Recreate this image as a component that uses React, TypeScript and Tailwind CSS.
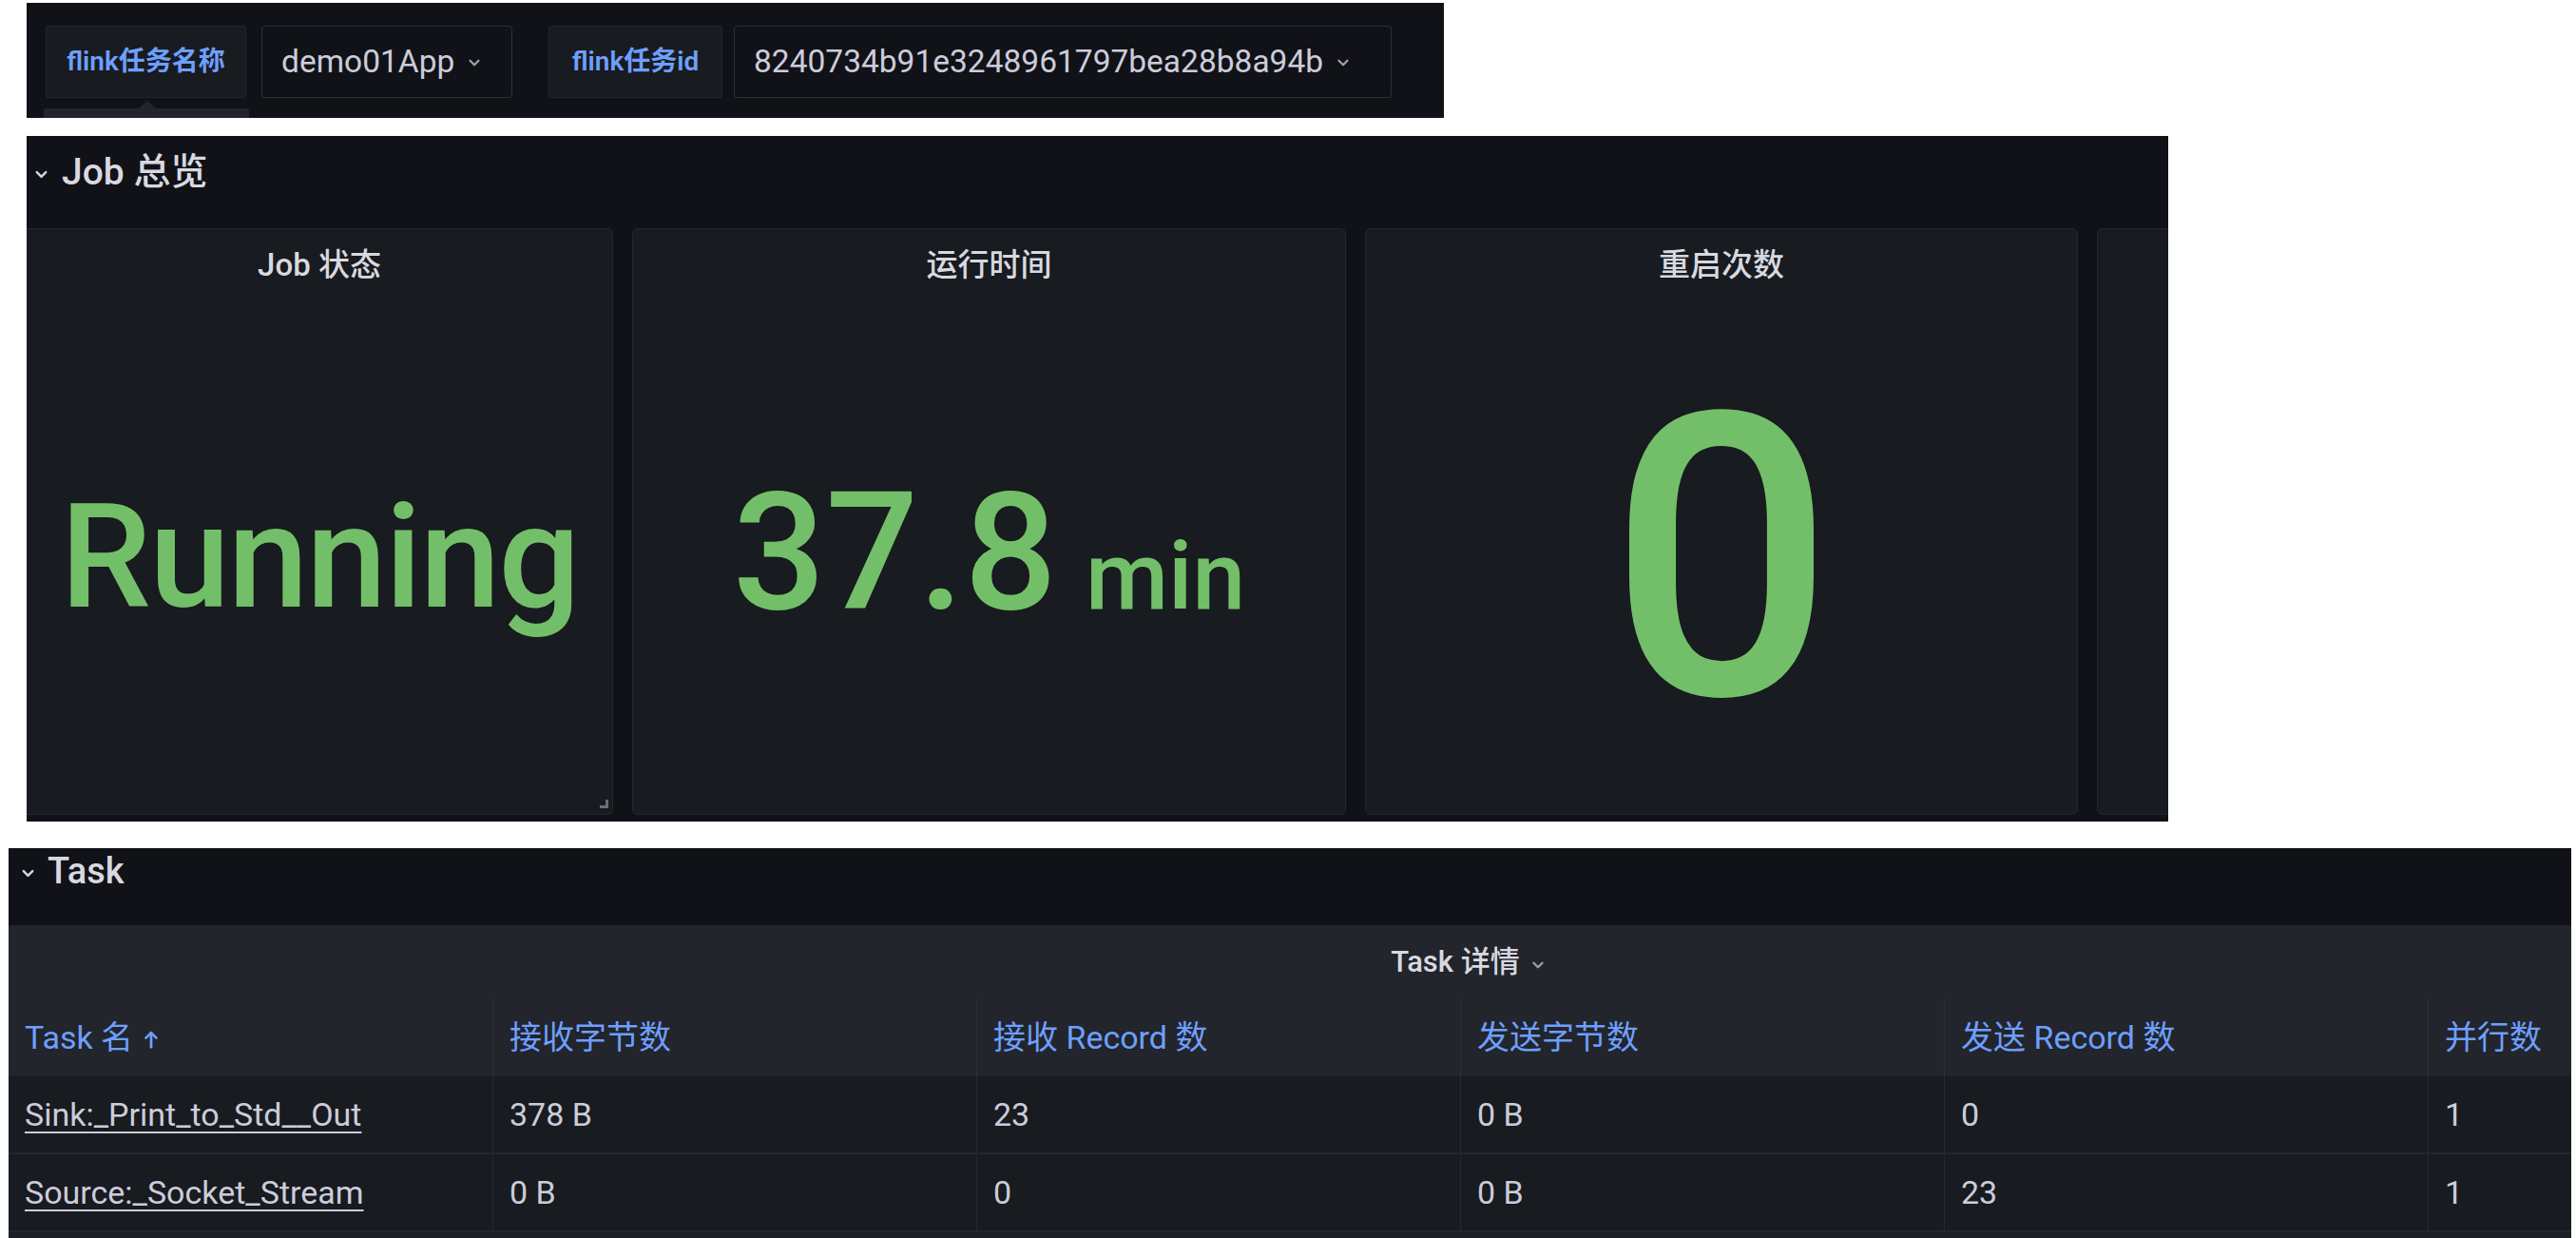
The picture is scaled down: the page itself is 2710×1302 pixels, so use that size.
const font = "font-[Roboto,'Noto_Sans_CJK_SC',sans-serif]";

function Chevron({ className = "" }: { className?: string }) {
  return (
    <svg viewBox="0 0 16 16" className={className} fill="none" stroke="currentColor" strokeWidth={2} strokeLinecap="round" strokeLinejoin="round">
      <polyline points="4,6 8,10 12,6" />
    </svg>
  );
}

function ArrowUp({ className = "" }: { className?: string }) {
  return (
    <svg viewBox="0 0 16 16" className={className} fill="none" stroke="currentColor" strokeWidth={2} strokeLinecap="round" strokeLinejoin="round">
      <line x1="8" y1="14" x2="8" y2="3" />
      <polyline points="4,7 8,3 12,7" />
    </svg>
  );
}

const VarLabel = ({ children, w }: { children: React.ReactNode; w: string }) => (
  <div className={`${w} h-[76px] flex items-center justify-center rounded-[3px] border border-[#23262b] bg-[#181b1f] text-[28px] font-semibold text-[#6e9fff]`}>
    {children}
  </div>
);

const VarValue = ({ children, w }: { children: React.ReactNode; w: string }) => (
  <div className={`${w} h-[76px] flex items-center gap-[12px] pl-[20px] rounded-[3px] border border-[#2c2f35] bg-[#111217] text-[33.5px] text-[#ccccdc]`}>
    <span>{children}</span>
    <Chevron className="w-[18px] h-[18px] text-[#9fa1a6] mt-[2px]" />
  </div>
);

const StatPanel = ({
  title,
  w,
  first,
  handle,
  children,
}: {
  title: string;
  w: string;
  first?: boolean;
  handle?: boolean;
  children?: React.ReactNode;
}) => (
  <div
    className={`${w} h-[617px] shrink-0 relative flex flex-col bg-[#181b1f] border border-[#24272c] ${
      first ? "border-l-0 rounded-r-[6px]" : "rounded-[6px]"
    }`}
  >
    <div className="h-[76px] flex items-center justify-center text-[33px] font-medium text-[#d8d9e0]">{title}</div>
    <div className="flex-1 flex items-center justify-center text-[#73bf69] font-medium leading-none">{children}</div>
    {handle && (
      <div className="absolute right-[4px] bottom-[6px] w-[9px] h-[9px] border-r-[3px] border-b-[3px] border-[#6b6d72]" />
    )}
  </div>
);

const cols = ["Task 名", "接收字节数", "接收 Record 数", "发送字节数", "发送 Record 数", "并行数"];
const rows = [
  ["Sink:_Print_to_Std__Out", "378 B", "23", "0 B", "0", "1"],
  ["Source:_Socket_Stream", "0 B", "0", "0 B", "23", "1"],
];

export default function App() {
  return (
    <div className={`min-h-screen bg-white ${font} flex flex-col items-start`}>
      {/* variables bar */}
      <div className="ml-[28px] mt-[3px] w-[1491px] h-[121px] bg-[#111217] relative flex items-start pt-[24px] pl-[20px]">
        <div className="relative">
          <VarLabel w="w-[211px]">flink任务名称</VarLabel>
          <div className="absolute left-[-2px] top-[87px] w-[216px] h-[10px] bg-[#22252b] rounded-t-[3px]" />
          <div className="absolute left-[98px] top-[79px] w-0 h-0 border-l-[9px] border-r-[9px] border-b-[8px] border-l-transparent border-r-transparent border-b-[#22252b]" />
        </div>
        <div className="ml-[16px]">
          <VarValue w="w-[264px]">demo01App</VarValue>
        </div>
        <div className="ml-[38px]">
          <VarLabel w="w-[183px]">flink任务id</VarLabel>
        </div>
        <div className="ml-[12px]">
          <VarValue w="w-[692px]">8240734b91e3248961797bea28b8a94b</VarValue>
        </div>
      </div>

      {/* Job overview row */}
      <div className="ml-[28px] mt-[19px] w-[2253px] h-[721px] bg-[#111217] overflow-hidden flex flex-col">
        <div className="h-[76px] flex items-center gap-[12px] pl-[6px] text-[#d8d9e0]">
          <Chevron className="w-[19px] h-[19px] mt-[4px]" />
          <span className="text-[39px] font-medium">Job 总览</span>
        </div>
        <div className="mt-[21px] flex gap-[20px]">
          <StatPanel title="Job 状态" w="w-[617px]" first handle>
            <span className="text-[152px] tracking-[-2px] mb-[2px]">Running</span>
          </StatPanel>
          <StatPanel title="运行时间" w="w-[751px]">
            <div className="flex items-baseline gap-[30px] mb-[12px]">
              <span className="text-[172px]">37.8</span>
              <span className="text-[100px]">min</span>
            </div>
          </StatPanel>
          <StatPanel title="重启次数" w="w-[750px]">
            <span className="text-[416px] leading-[0.8] mt-[4px]">0</span>
          </StatPanel>
          <StatPanel title="" w="w-[750px]" />
        </div>
      </div>

      {/* Task row */}
      <div className="ml-[9px] mt-[28px] w-[2696px] h-[410px] bg-[#111217] overflow-hidden flex flex-col">
        <div className="h-[48px] flex items-center gap-[11px] pl-[11px] text-[#d8d9e0]">
          <Chevron className="w-[19px] h-[19px] mt-[4px]" />
          <span className="text-[38px] font-medium">Task</span>
        </div>
        <div className="mt-[33px] w-[3072px] shrink-0 bg-[#22252b] rounded-t-[4px] flex flex-col">
          <div className="h-[78px] flex items-center justify-center gap-[10px] text-[#d8d9e0]">
            <span className="text-[31px] font-medium">Task 详情</span>
            <Chevron className="w-[18px] h-[18px] text-[#9fa1a6] mt-[6px]" />
          </div>
          <div className="flex h-[81px] bg-[#22252b]">
            {cols.map((c, i) => (
              <div
                key={c}
                className={`w-[509px] flex items-center gap-[8px] px-[17px] text-[34px] text-[#6e9fff] ${
                  i > 0 ? "border-l border-[#2c2f35]" : ""
                }`}
              >
                <span>{c}</span>
                {i === 0 && <ArrowUp className="w-[22px] h-[22px] mt-[2px]" />}
              </div>
            ))}
          </div>
          {rows.map((r, ri) => (
            <div key={ri} className="flex h-[82px] bg-[#181b1f] border-b-2 border-[#24272c]">
              {r.map((v, i) => (
                <div
                  key={i}
                  className={`w-[509px] flex items-center px-[17px] text-[34px] text-[#ccccdc] ${
                    i > 0 ? "border-l border-[#26292e]" : ""
                  }`}
                >
                  {i === 0 ? <span className="underline underline-offset-[6px] decoration-[2px]">{v}</span> : v}
                </div>
              ))}
            </div>
          ))}
          <div className="h-[40px] bg-[#1c1f24]" />
        </div>
      </div>
    </div>
  );
}
